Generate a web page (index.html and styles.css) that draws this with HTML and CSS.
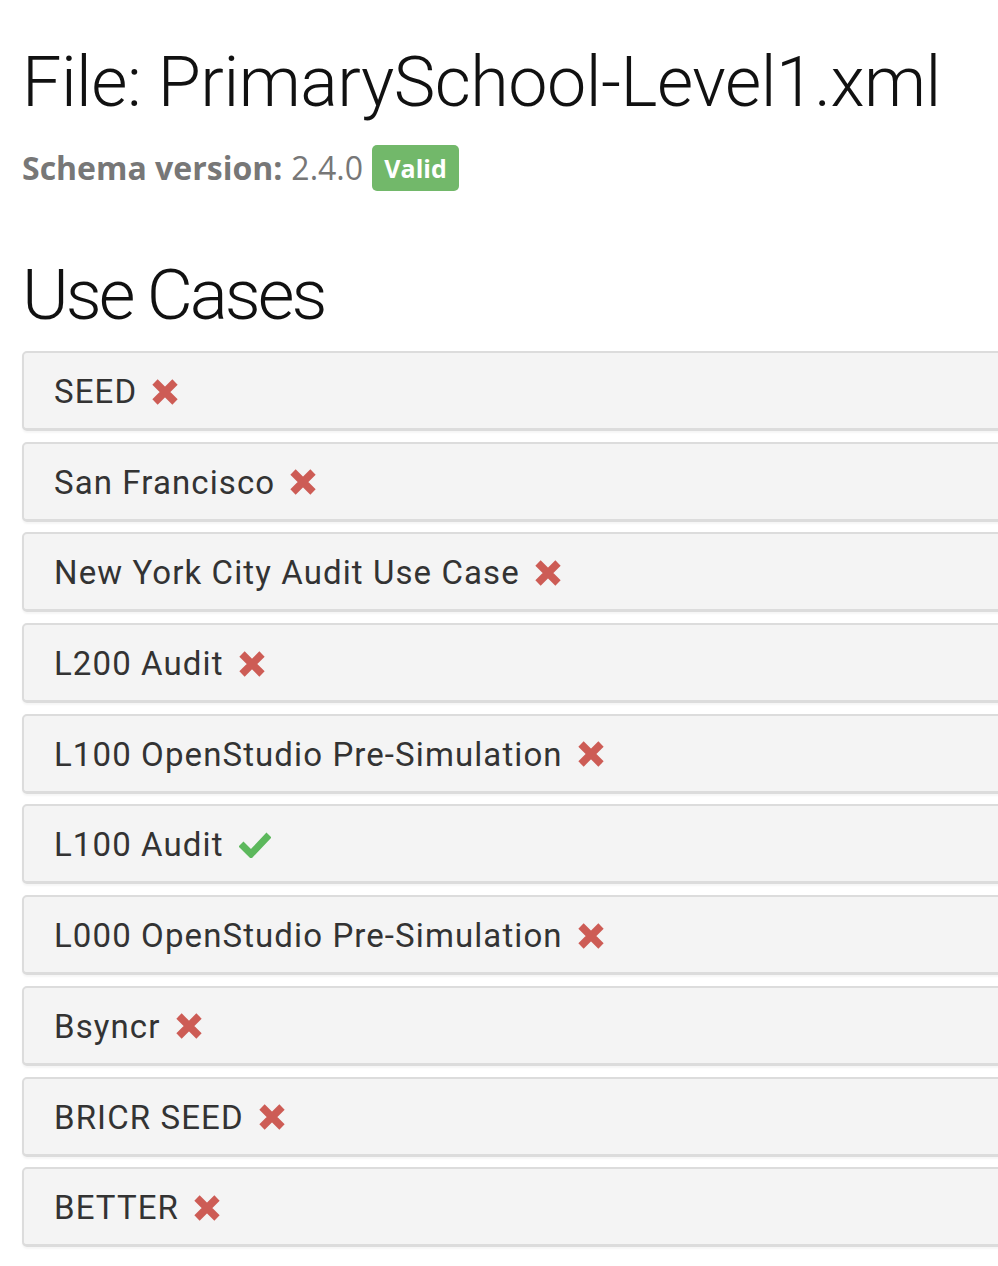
FILE: index.html
```html
<!DOCTYPE html>
<html lang="en">
<head>
<meta charset="utf-8">
<title>PrimarySchool-Level1.xml</title>
<link rel="stylesheet" href="styles.css">
</head>
<body>
<main class="page">
  <h1 class="title">File: PrimarySchool-Level1.xml</h1>
  <p class="schema"><strong>Schema version:</strong> 2.4.0 <span class="badge">Valid</span></p>
  <h2 class="section">Use Cases</h2>
  <ul class="cases">
    <li class="case"><span class="name">SEED</span><svg class="icon x" viewBox="0 0 26 26"><path d="M3 3L23 23M23 3L3 23"/></svg></li>
    <li class="case"><span class="name">San Francisco</span><svg class="icon x" viewBox="0 0 26 26"><path d="M3 3L23 23M23 3L3 23"/></svg></li>
    <li class="case"><span class="name">New York City Audit Use Case</span><svg class="icon x" viewBox="0 0 26 26"><path d="M3 3L23 23M23 3L3 23"/></svg></li>
    <li class="case"><span class="name">L200 Audit</span><svg class="icon x" viewBox="0 0 26 26"><path d="M3 3L23 23M23 3L3 23"/></svg></li>
    <li class="case"><span class="name">L100 OpenStudio Pre-Simulation</span><svg class="icon x" viewBox="0 0 26 26"><path d="M3 3L23 23M23 3L3 23"/></svg></li>
    <li class="case"><span class="name">L100 Audit</span><svg class="icon check" viewBox="0 0 32 27"><path d="M2 13L12 23L30 4"/></svg></li>
    <li class="case"><span class="name">L000 OpenStudio Pre-Simulation</span><svg class="icon x" viewBox="0 0 26 26"><path d="M3 3L23 23M23 3L3 23"/></svg></li>
    <li class="case"><span class="name">Bsyncr</span><svg class="icon x" viewBox="0 0 26 26"><path d="M3 3L23 23M23 3L3 23"/></svg></li>
    <li class="case"><span class="name">BRICR SEED</span><svg class="icon x" viewBox="0 0 26 26"><path d="M3 3L23 23M23 3L3 23"/></svg></li>
    <li class="case"><span class="name">BETTER</span><svg class="icon x" viewBox="0 0 26 26"><path d="M3 3L23 23M23 3L3 23"/></svg></li>
  </ul>
</main>
</body>
</html>
```

FILE: styles.css
```css
html, body {
  margin: 0;
  padding: 0;
  overflow-x: hidden;
  background: #fff;
}
.page {
  padding: 0 0 0 22px;
}
.title {
  margin: 0;
  padding-top: 40px;
  font-family: Roboto, sans-serif;
  font-weight: 300;
  font-size: 70px;
  line-height: 84px;
  letter-spacing: -0.5px;
  color: #111;
}
.schema {
  margin: 21px 0 0;
  font-family: "Open Sans", sans-serif;
  font-size: 32px;
  line-height: 46px;
  color: #777;
  display: flex;
  align-items: center;
  gap: 9px;
}
.schema strong {
  font-weight: 700;
}
.badge {
  display: inline-flex;
  align-items: center;
  justify-content: center;
  width: 87px;
  height: 46px;
  border-radius: 5px;
  background: #72b86a;
  color: #fff;
  font-weight: 700;
  font-size: 25px;
}
.section {
  margin: 62px 0 0;
  font-family: Roboto, sans-serif;
  font-weight: 300;
  font-size: 71px;
  line-height: 84px;
  letter-spacing: -3px;
  color: #111;
}
.cases {
  list-style: none;
  margin: 14px -40px 0 0;
  padding: 0;
}
.case {
  display: flex;
  align-items: center;
  gap: 15px;
  height: 80px;
  box-sizing: border-box;
  margin-bottom: 10.7px;
  padding: 2px 30px 0;
  background: #f4f4f4;
  border: 2px solid #dcdcdc;
  border-width: 2px 1px 3px 2px;
  border-radius: 5px;
  box-shadow: 0 2px 2px rgba(0,0,0,0.04);
}
.name {
  font-family: Roboto, sans-serif;
  font-size: 33px;
  font-weight: 400;
  letter-spacing: 1.1px;
  color: #333;
}
.icon {
  flex: none;
  fill: none;
}
.icon.x {
  width: 26px;
  height: 26px;
  stroke: #cd5c55;
  stroke-width: 7.5;
}
.icon.check {
  width: 32px;
  height: 27px;
  stroke: #5cb85c;
  stroke-width: 7;
}
```
